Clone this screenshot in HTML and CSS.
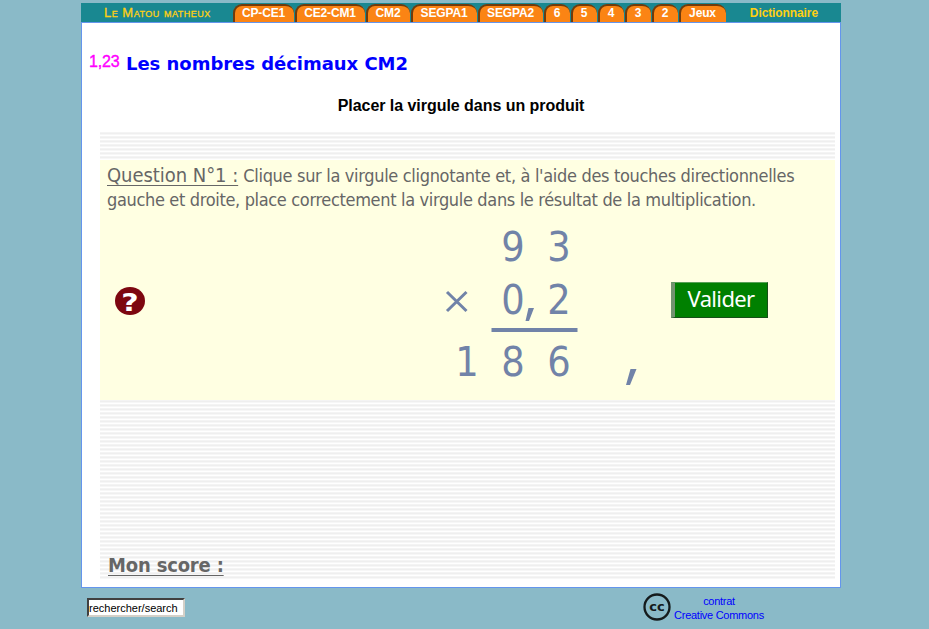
FILE: index.html
```html
<!DOCTYPE html>
<html lang="fr">
<head>
<meta charset="utf-8">
<title>Le Matou matheux</title>
<link rel="stylesheet" href="styles.css">
</head>
<body>
<div class="page">
  <nav class="topbar">
    <a class="brand">Le Matou matheux</a>
    <div class="tabs">
      <a class="tab w61">CP-CE1</a><a class="tab w70">CE2-CM1</a><a class="tab w44">CM2</a><a class="tab w66">SEGPA1</a><a class="tab w65">SEGPA2</a><a class="tab">6</a><a class="tab">5</a><a class="tab">4</a><a class="tab">3</a><a class="tab">2</a><a class="tab w47">Jeux</a>
    </div>
    <a class="dictionary">Dictionnaire</a>
  </nav>
  <main class="panel">
    <header class="heading"><span class="sample">1,23</span><h1>Les nombres décimaux CM2</h1></header>
    <h2>Placer la virgule dans un produit</h2>
    <section class="exercise">
      <div class="question">
        <p class="instruction"><span class="line first"><u>Question N°1 :</u> <span class="lead">Clique sur la virgule clignotante et, à l'aide des touches directionnelles</span></span><span class="line second">gauche et droite, place correctement la virgule dans le résultat de la multiplication.</span></p>
        <div class="work">
          <svg class="help" viewBox="0 0 30 28"><ellipse cx="15" cy="14" rx="15" ry="14"/><text transform="translate(15 23.500) scale(1.2 1)">?</text></svg>
          <svg class="sum" viewBox="0 0 230 180">
            <g class="digits"><text x="83" y="41">9</text><text x="129" y="41">3</text><text x="83" y="94">0</text><text x="129" y="94">2</text><text x="37" y="156">1</text><text x="83" y="156">8</text><text x="129" y="156">6</text></g>
            <path class="times" d="M17 72L36.500 91M36.500 72L17 91"/>
            <path class="rule" d="M61.500 110H147.500"/>
            <path class="comma" d="M98.500 88h5.500l-5 13h-3.500zM200.500 149h6l-6.500 16h-4z"/>
          </svg>
          <button class="submit">Valider</button>
        </div>
      </div>
      <div class="score"><u>Mon score :</u></div>
    </section>
  </main>
  <footer>
    <input class="search" value="rechercher/search">
    <a class="license">
      <svg class="cc" viewBox="0 0 28 28"><circle cx="14" cy="14" r="12.500"/><text x="14" y="18">cc</text></svg>
      <span class="contract">contrat<br>Creative Commons</span>
    </a>
  </footer>
</div>
</body>
</html>
```
FILE: styles.css
```css
* { box-sizing: border-box; }
body { margin: 0; background: #8abac8; font-family: "Liberation Sans", sans-serif; overflow: hidden; }
.page { width: 760px; margin: 0 7px 0 81px; padding-top: 3px; }
.topbar { height: 19px; background: #198891; display: flex; font-size: 12px; font-weight: bold; line-height: 20px; color: #ffd012; }
.brand { width: 152px; padding-left: 23px; font-variant: small-caps; font-weight: normal; font-size: 13px; letter-spacing: .5px; -webkit-text-stroke: .3px #ffd012; white-space: nowrap; }
.tabs { display: flex; gap: 1px; padding-top: 1px; }
.tab { width: 26px; height: 18px; padding-right: 2px; background: #fb8414; color: #fff; text-align: center; line-height: 15px; letter-spacing: -.15px; border-top: 2px solid #713b0c; border-left: 2px solid #713b0c; border-radius: 9px 9px 0 0; white-space: nowrap; }
.w61 { width: 61px; } .w70 { width: 70px; } .w44 { width: 44px; } .w66 { width: 66px; } .w65 { width: 65px; } .w47 { width: 47px; }
.dictionary { margin-left: auto; margin-right: 23px; letter-spacing: -.1px; }
.panel { height: 566px; border: 1px solid #6495ed; background: #fff; padding: 28px 5px 0 7px; }
.heading { display: flex; height: 26px; }
.sample { width: 37px; color: #f0f; font-size: 16px; line-height: 22px; -webkit-text-stroke: .4px #f0f; letter-spacing: -.2px; }
h1 { margin: 0; color: #00f; font: bold 18px/25px "DejaVu Sans", sans-serif; letter-spacing: -.03px; white-space: nowrap; }
h2 { margin: 19px 0 0; padding-right: 2px; text-align: center; font-size: 16px; line-height: 19px; letter-spacing: -.04px; color: #000; }
.exercise { width: 735px; height: 448px; margin: 17px 0 0 11px; padding-top: 28px; background: repeating-linear-gradient(#f4f4f4 0 1px, #efefef 1px 2px, #f7f7f7 2px 3px, #fff 3px 4px); }
.question { height: 240px; background: #ffffe2; color: #666; }
.instruction { margin: 0; padding: 3px 7px 0; font: 18px/24px "DejaVu Sans Condensed", "DejaVu Sans", sans-serif; font-stretch: condensed; }
.line { display: block; height: 24px; white-space: nowrap; }
.first u { font-size: 20px; letter-spacing: -.05px; text-underline-offset: 3px; text-decoration-thickness: 1px; }
.lead { letter-spacing: -.325px; }
.second { letter-spacing: -.34px; padding-top: 1px; }
.work { display: flex; }
.help { width: 30px; height: 28px; margin: 76px 0 0 15px; fill: #7d0710; overflow: visible; }
.help text { fill: #fff; font: bold 25px "DejaVu Sans", sans-serif; text-anchor: middle; }
.sum { width: 230px; height: 180px; margin: 9px 0 0 285px; }
.digits { fill: #7183a8; font: 41px "DejaVu Sans Condensed", "DejaVu Sans", sans-serif; font-stretch: condensed; text-anchor: middle; }
.times { stroke: #7183a8; stroke-width: 3; }
.rule { stroke: #7183a8; stroke-width: 4; }
.comma { fill: #7183a8; }
.submit { width: 97px; height: 36px; margin: 71px 0 0 11px; padding: 0 0 5px; border: 1px solid #174f18; border-left: 4px solid #739270; border-top-color: #56a056; background: #008000; color: #fff; font: 22px/28px "Noto Sans", sans-serif; letter-spacing: -.65px; }
.score { margin: 151px 0 0 8px; color: #666; font: bold 20px/28px "DejaVu Sans Condensed", "DejaVu Sans", sans-serif; font-stretch: condensed; letter-spacing: -.18px; }
.score u { text-decoration-thickness: 1px; text-underline-offset: 3px; }
footer { display: flex; align-items: flex-start; padding: 5px 0 0 6px; }
.search { width: 98px; height: 19px; margin-top: 5px; padding: 1px 0 0; border: 2px solid; border-color: #404040 #d4d0c8 #d4d0c8 #404040; background: #fff; font: 11px "Liberation Sans", sans-serif; color: #000; }
.license { display: flex; margin-left: 458px; color: #00f; }
.cc { width: 28px; height: 28px; fill: none; stroke: #151b1c; stroke-width: 2.300; }
.cc text { fill: #151b1c; stroke: none; font: bold 13px "DejaVu Sans", sans-serif; text-anchor: middle; }
.contract { width: 90px; margin-left: 3px; padding-top: 1px; text-align: center; font-size: 11px; line-height: 14px; letter-spacing: -.27px; white-space: nowrap; }
```
